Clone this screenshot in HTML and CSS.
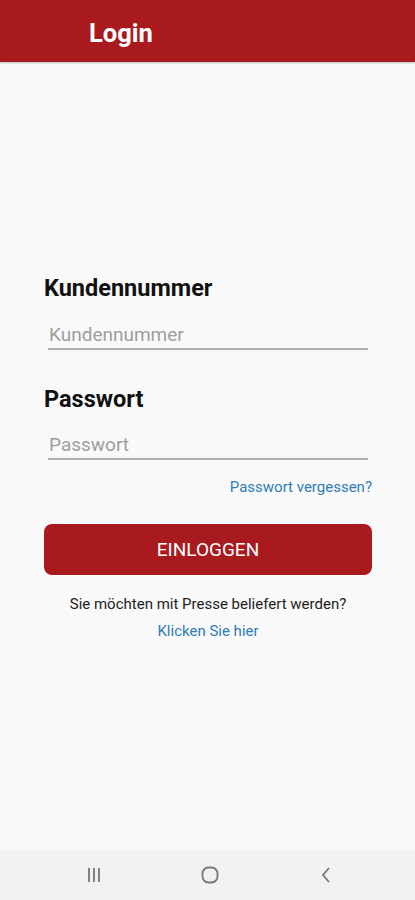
FILE: index.html
```html
<!DOCTYPE html>
<html lang="de">
<head>
    <meta charset="UTF-8">
    <meta name="viewport" content="width=device-width, initial-scale=1.0">
    <title>Login</title>
    <link rel="stylesheet" href="styles.css">
</head>
<body>
    <header class="topbar">
        <h1>Login</h1>
    </header>

    <main class="content">
        <div class="login-form">
            <!-- Kundennummer -->
            <label for="kundennummer" class="field-label">Kundennummer</label>
            <input type="text" id="kundennummer" class="field-input" placeholder="Kundennummer">

            <!-- Passwort -->
            <label for="passwort" class="field-label second">Passwort</label>
            <input type="password" id="passwort" class="field-input" placeholder="Passwort">

            <div class="forgot">
                <a href="#">Passwort vergessen?</a>
            </div>

            <button class="login-button">EINLOGGEN</button>

            <p class="signup-text">Sie möchten mit Presse beliefert werden?</p>
            <a href="#" class="signup-link">Klicken Sie hier</a>
        </div>
    </main>

    <nav class="navbar">
        <svg width="20" height="20" viewBox="0 0 20 20">
            <path d="M5 3v14M10 3v14M15 3v14" stroke="#777" stroke-width="1.8" fill="none"/>
        </svg>
        <svg width="20" height="20" viewBox="0 0 20 20">
            <rect x="2.5" y="2.5" width="15" height="15" rx="6" stroke="#777" stroke-width="1.8" fill="none"/>
        </svg>
        <svg width="20" height="20" viewBox="0 0 20 20">
            <path d="M13 3l-6 7 6 7" stroke="#777" stroke-width="1.8" fill="none"/>
        </svg>
    </nav>
</body>
</html>
```

FILE: styles.css
```css
* {
  box-sizing: border-box;
}

body {
  margin: 0;
  height: 900px;
  display: flex;
  flex-direction: column;
  background-color: #f9f9f9;
  font-family: Roboto, "Liberation Sans", sans-serif;
}

.topbar {
  height: 62px;
  background-color: #a81a1e;
  display: flex;
  align-items: center;
  padding-left: 89px;
  padding-top: 3px;
  box-shadow: 0 1px 2px rgba(0, 0, 0, 0.25);
}

.topbar h1 {
  margin: 0;
  color: #fff;
  font-size: 25.5px;
  font-weight: 700;
}

.content {
  flex: 1;
  padding: 0 43px 0 44px;
}

.login-form {
  display: flex;
  flex-direction: column;
  padding-top: 212px;
}

.field-label {
  font-size: 23.5px;
  line-height: 28px;
  font-weight: 700;
  color: #111;
}

.field-label.second {
  margin-top: 35px;
}

.field-input {
  margin: 21px 4px 0 4px;
  height: 27px;
  border: none;
  border-bottom: 2px solid #b0b0b0;
  background: transparent;
  font-family: inherit;
  font-size: 19px;
  line-height: 22px;
  padding: 0 0 3px 1px;
  color: #333;
  outline: none;
}

.field-input:last-of-type {
  margin-top: 20px;
}

.field-input::placeholder {
  color: #9e9e9e;
}

.forgot {
  margin-top: 18px;
  text-align: right;
  line-height: 18px;
}

.forgot a {
  color: #2e7cb8;
  font-size: 15px;
  text-decoration: none;
}

.login-button {
  margin-top: 28px;
  height: 51px;
  background-color: #a81a1e;
  color: #fff;
  border: none;
  border-radius: 8px;
  font-family: inherit;
  font-size: 19px;
  cursor: pointer;
}

.signup-text {
  margin: 20px 0 0 0;
  text-align: center;
  font-size: 15px;
  line-height: 18px;
  color: #222;
}

.signup-link {
  margin-top: 9px;
  text-align: center;
  font-size: 15px;
  line-height: 18px;
  color: #2e7cb8;
  text-decoration: none;
}

.navbar {
  height: 50px;
  background-color: #f1f1f1;
  display: flex;
  justify-content: space-between;
  align-items: center;
  padding: 0 79px 0 84px;
}
```
